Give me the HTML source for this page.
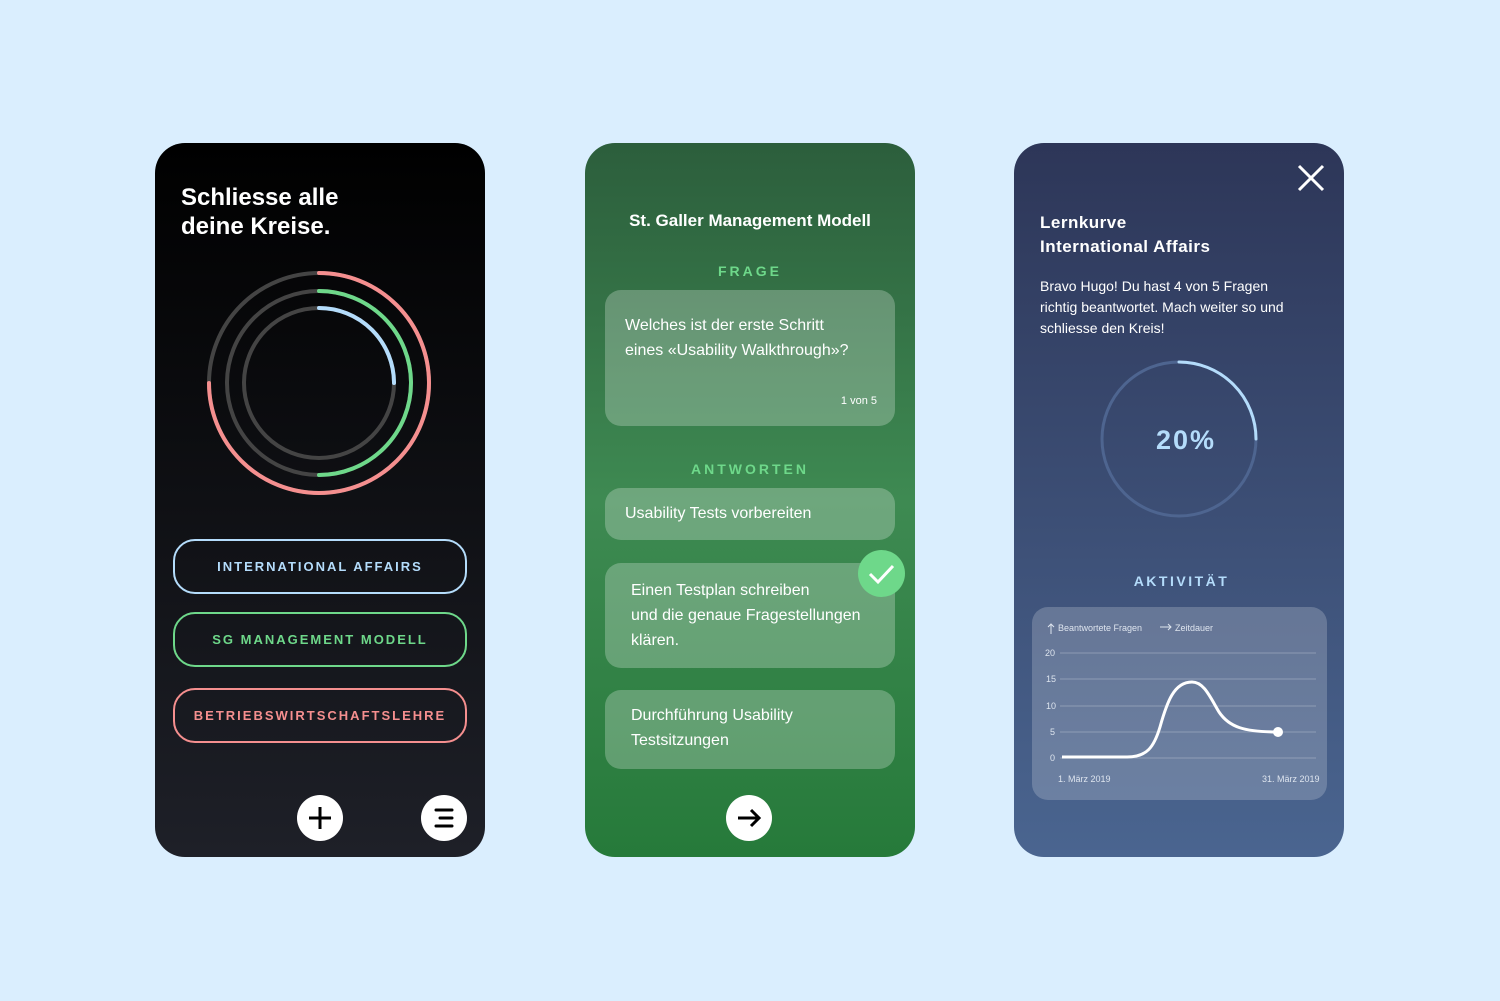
<!DOCTYPE html><html><head><meta charset="utf-8"><style>
body{margin:0;width:1500px;height:1001px;background:#daeefe;position:relative;font-family:"Liberation Sans",sans-serif;overflow:hidden}
.p{position:absolute;top:143px;width:330px;height:714px;border-radius:30px;overflow:hidden}
.a{position:absolute;color:#fff}
.btn{position:absolute;left:18px;width:290px;height:51px;border:2px solid;border-radius:22px;text-align:center;line-height:51px;font-weight:bold;font-size:13px;letter-spacing:2px}
.card{position:absolute;left:20px;width:290px;background:rgba(255,255,255,.25);border-radius:16px;color:#fff;font-size:16px;line-height:25px}
.circ{position:absolute;width:46px;height:46px;border-radius:50%;background:#fff}
</style></head><body>
<div class="p" style="left:155px;background:linear-gradient(#000,#1e2028)">
<div class="a" style="left:26px;top:40px;font-size:24px;font-weight:bold;line-height:29px">Schliesse alle<br>deine Kreise.</div>
<svg style="position:absolute;left:0;top:0" width="330" height="400"><g fill="none" stroke-width="4" stroke-linecap="round">
<circle cx="164" cy="240" r="110" stroke="#444"/><circle cx="164" cy="240" r="92" stroke="#444"/><circle cx="164" cy="240" r="75" stroke="#444"/>
<path d="M164 130A110 110 0 1 1 54 240" stroke="#f58f8f"/>
<path d="M164 148A92 92 0 0 1 164 332" stroke="#6ed88a"/>
<path d="M164 165A75 75 0 0 1 239 240" stroke="#b4dcfb"/></g></svg>
<div class="btn" style="top:396px;border-color:#b4dcfb;color:#b4dcfb">INTERNATIONAL AFFAIRS</div>
<div class="btn" style="top:469px;border-color:#6ed88a;color:#6ed88a">SG MANAGEMENT MODELL</div>
<div class="btn" style="top:545px;border-color:#f58f8f;color:#f58f8f">BETRIEBSWIRTSCHAFTSLEHRE</div>
<div class="circ" style="left:142px;top:652px"><svg width="46" height="46"><path d="M23 12V34M12 23H34" stroke="#000" stroke-width="3"/></svg></div>
<div class="circ" style="left:266px;top:652px"><svg width="46" height="46"><path d="M15 15H31M19 23H31M15 31H31" stroke="#000" stroke-width="3" stroke-linecap="round"/></svg></div>
</div>
<div class="p" style="left:585px;background:linear-gradient(#2c5e3c,#3e8a52 50%,#267a3a)">
<div class="a" style="left:0;width:330px;text-align:center;top:68px;font-size:17px;font-weight:bold">St. Galler Management Modell</div>
<div class="a" style="left:0;width:330px;text-align:center;top:120px;font-size:14px;font-weight:bold;letter-spacing:3px;color:#6ed88a">FRAGE</div>
<div class="card" style="top:147px;height:136px"><div style="padding:23px 20px">Welches ist der erste Schritt<br>eines «Usability Walkthrough»?</div><div style="position:absolute;right:18px;top:104px;font-size:11px;line-height:14px">1 von 5</div></div>
<div class="a" style="left:0;width:330px;text-align:center;top:318px;font-size:14px;font-weight:bold;letter-spacing:3px;color:#6ed88a">ANTWORTEN</div>
<div class="card" style="top:345px;height:52px"><div style="padding:13px 20px">Usability Tests vorbereiten</div></div>
<div class="card" style="top:420px;height:105px"><div style="padding:15px 26px">Einen Testplan schreiben<br>und die genaue Fragestellungen<br>klären.</div></div>
<div style="position:absolute;left:273px;top:407px;width:47px;height:47px;border-radius:50%;background:#6ed88a"><svg width="47" height="47"><path d="M12 24L20 32L35 16" stroke="#fff" stroke-width="3" fill="none"/></svg></div>
<div class="card" style="top:547px;height:79px"><div style="padding:13px 26px">Durchführung Usability<br>Testsitzungen</div></div>
<div class="circ" style="left:141px;top:652px"><svg width="46" height="46"><path d="M12 23H33M25 15L33 23L25 31" stroke="#000" stroke-width="3" fill="none"/></svg></div>
</div>
<div class="p" style="left:1014px;background:linear-gradient(#2d3658,#4a6590)">
<svg style="position:absolute;left:282px;top:20px" width="30" height="30"><path d="M3 3L27 27M27 3L3 27" stroke="#fff" stroke-width="3"/></svg>
<div class="a" style="left:26px;top:68px;font-size:17px;font-weight:bold;line-height:24px;letter-spacing:.5px">Lernkurve<br>International Affairs</div>
<div class="a" style="left:26px;top:133px;font-size:14px;line-height:21px">Bravo Hugo! Du hast 4 von 5 Fragen<br>richtig beantwortet. Mach weiter so und<br>schliesse den Kreis!</div>
<svg style="position:absolute;left:0;top:200px" width="330" height="200"><circle cx="165" cy="96" r="77" fill="none" stroke="#4e6590" stroke-width="3"/><path d="M165 19A77 77 0 0 1 242 96" fill="none" stroke="#b4dcfb" stroke-width="3" stroke-linecap="round"/>
<text x="172" y="106" text-anchor="middle" fill="#b4dcfb" font-size="27" font-weight="bold" letter-spacing="2" font-family="Liberation Sans">20%</text></svg>
<div class="a" style="left:0;width:335px;text-align:center;top:430px;font-size:14px;font-weight:bold;letter-spacing:2.5px;color:#b4dcfb">AKTIVITÄT</div>
<div style="position:absolute;left:18px;top:464px;width:295px;height:193px;border-radius:16px;background:rgba(255,255,255,.2)">
<svg width="295" height="193" font-family="Liberation Sans" font-size="9" fill="#dde4ee"><text x="26" y="24">Beantwortete Fragen</text><text x="143" y="24">Zeitdauer</text>
<path d="M19 27V17M16 20L19 17L22 20M128 20H139M136 17L139 20L136 23" stroke="#dde4ee" fill="none"/>
<g stroke="rgba(255,255,255,.25)"><path d="M28 46H284M28 72H284M28 99H284M28 125H284M28 151H284"/></g>
<text x="13" y="49">20</text><text x="14" y="75">15</text><text x="14" y="102">10</text><text x="18" y="128">5</text><text x="18" y="154">0</text>
<text x="26" y="175">1. März 2019</text><text x="230" y="175">31. März 2019</text>
<path d="M30 150H95C115 150 122 140 128 120C135 95 142 75 160 75C172 75 178 90 187 105C197 120 212 125 246 125" stroke="#fff" stroke-width="3" fill="none"/><circle cx="246" cy="125" r="5" fill="#fff"/></svg></div>
</div>
</body></html>
